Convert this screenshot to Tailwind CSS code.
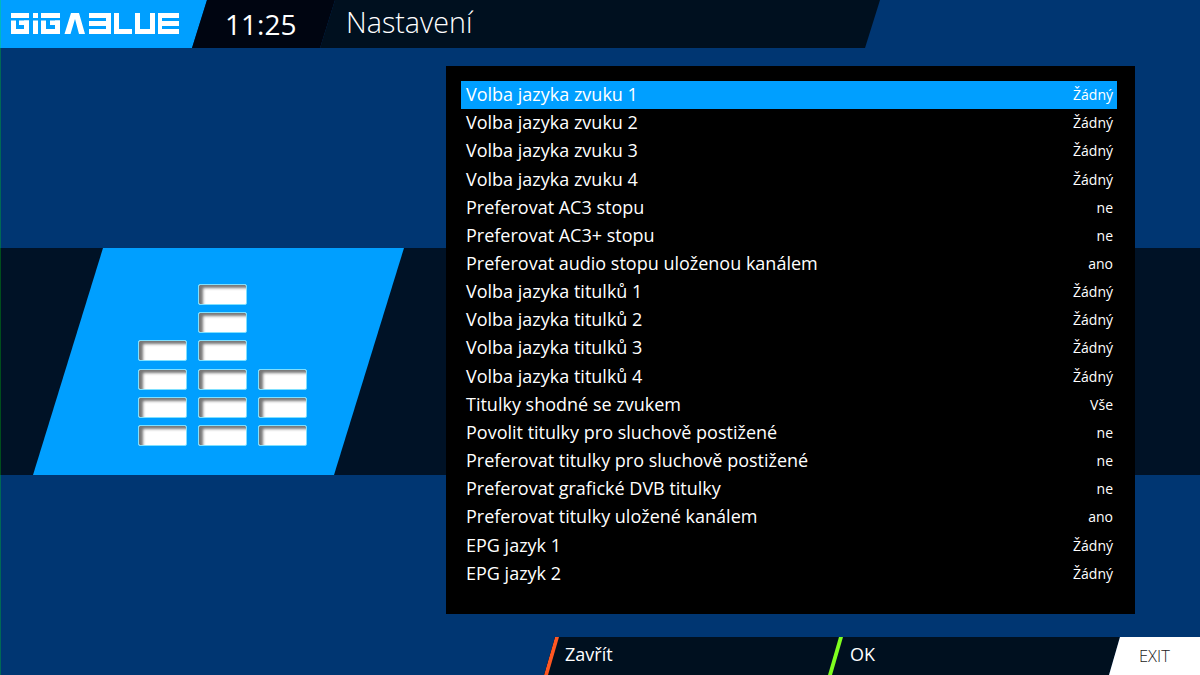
<!DOCTYPE html>
<html lang="cs">
<head>
<meta charset="utf-8">
<script src="https://cdn.jsdelivr.net/npm/@tailwindcss/browser@4"></script>
</head>
<body class="m-0">
<div class="relative w-[1200px] h-[675px] overflow-hidden bg-[#003672] text-white font-['Open_Sans','Noto_Sans',sans-serif]">

  <!-- header -->
  <header class="relative z-10 flex h-[48px] w-[880px]">
    <div class="w-[207px] h-full shrink-0 bg-[#009fff] [clip-path:polygon(0_0,100%_0,192px_100%,0_100%)] flex items-start pt-[13px] pl-[11px]">
      <svg width="168" height="21" viewBox="0 0 168 21" fill="#fff" role="img" aria-label="GigaBlue logo">
        <rect x="0" y="0" width="18" height="5"/><rect x="0" y="7.500" width="5" height="13.500"/><rect x="0" y="16" width="18" height="5"/><rect x="8" y="7.500" width="10" height="4.500"/><rect x="13" y="7.500" width="5" height="13.500"/>
        <rect x="22" y="0" width="5" height="5"/><rect x="22" y="7.500" width="5" height="13.500"/>
        <rect x="30" y="0" width="19" height="5"/><rect x="30" y="7.500" width="5" height="13.500"/><rect x="30" y="16" width="19" height="5"/><rect x="39" y="7.500" width="10" height="4.500"/><rect x="44" y="7.500" width="5" height="13.500"/>
        <path d="M60 0h8l6 21h-6l-4-15-4.500 15h-6z"/>
        <rect x="78" y="0" width="22" height="5"/><rect x="78" y="8" width="22" height="5"/><rect x="78" y="16" width="22" height="5"/><rect x="95" y="0" width="5" height="21"/>
        <rect x="103" y="0" width="5" height="21"/><rect x="103" y="16" width="18" height="5"/>
        <rect x="124" y="0" width="5" height="21"/><rect x="124" y="16" width="20" height="5"/><rect x="139" y="0" width="5" height="21"/>
        <rect x="147" y="0" width="21" height="5"/><rect x="147" y="8" width="21" height="5"/><rect x="147" y="16" width="21" height="5"/><rect x="147" y="0" width="4" height="21"/>
      </svg>
    </div>
    <div class="w-[143px] h-full shrink-0 -ml-[15px] bg-[#000511] [clip-path:polygon(15px_0,100%_0,128px_100%,0_100%)] flex items-center pl-[33px] text-[28px] font-normal">11:25</div>
    <div class="flex-1 h-full -ml-[15px] bg-[#00101f] [clip-path:polygon(15px_0,100%_0,calc(100%-15px)_100%,0_100%)] flex items-center pl-[26px] pb-[4px] text-[28.7px] font-light">Nastavení</div>
  </header>

  <!-- band behind the content -->
  <div class="absolute left-0 right-0 top-[248px] h-[227px] bg-[#001226]"></div>
  <div class="absolute z-20 left-0 top-0 h-full w-[1px] bg-[#00ff00]/25"></div>

  <!-- blue parallelogram with icon -->
  <div class="absolute left-[33px] top-[248px] w-[371px] h-[227px] bg-[#009fff] [clip-path:polygon(70px_0,100%_0,301px_100%,0_100%)]">
    <div class="absolute left-[104.500px] top-[36px] grid grid-cols-[49px_49px_49px] gap-x-[11px] gap-y-[7.200px]">
      <i class="col-start-2 h-[21px] block bg-white rounded-[2px] border-[1.5px] border-[#7fe0ff] shadow-[inset_4px_3px_3px_#777]"></i>
      <i class="col-start-2 h-[21px] block bg-white rounded-[2px] border-[1.5px] border-[#7fe0ff] shadow-[inset_4px_3px_3px_#777]"></i>
      <i class="col-start-1 h-[21px] block bg-white rounded-[2px] border-[1.5px] border-[#7fe0ff] shadow-[inset_4px_3px_3px_#777]"></i>
      <i class="col-start-2 h-[21px] block bg-white rounded-[2px] border-[1.5px] border-[#7fe0ff] shadow-[inset_4px_3px_3px_#777]"></i>
      <i class="col-start-1 h-[21px] block bg-white rounded-[2px] border-[1.5px] border-[#7fe0ff] shadow-[inset_4px_3px_3px_#777]"></i>
      <i class="h-[21px] block bg-white rounded-[2px] border-[1.5px] border-[#7fe0ff] shadow-[inset_4px_3px_3px_#777]"></i>
      <i class="h-[21px] block bg-white rounded-[2px] border-[1.5px] border-[#7fe0ff] shadow-[inset_4px_3px_3px_#777]"></i>
      <i class="h-[21px] block bg-white rounded-[2px] border-[1.5px] border-[#7fe0ff] shadow-[inset_4px_3px_3px_#777]"></i>
      <i class="h-[21px] block bg-white rounded-[2px] border-[1.5px] border-[#7fe0ff] shadow-[inset_4px_3px_3px_#777]"></i>
      <i class="h-[21px] block bg-white rounded-[2px] border-[1.5px] border-[#7fe0ff] shadow-[inset_4px_3px_3px_#777]"></i>
      <i class="h-[21px] block bg-white rounded-[2px] border-[1.5px] border-[#7fe0ff] shadow-[inset_4px_3px_3px_#777]"></i>
      <i class="h-[21px] block bg-white rounded-[2px] border-[1.5px] border-[#7fe0ff] shadow-[inset_4px_3px_3px_#777]"></i>
      <i class="h-[21px] block bg-white rounded-[2px] border-[1.5px] border-[#7fe0ff] shadow-[inset_4px_3px_3px_#777]"></i>
    </div>
  </div>

  <!-- settings list -->
  <main class="absolute left-[446px] top-[66px] w-[689px] h-[548px] bg-black pt-[15px] px-[15px]">
    <ul class="w-[656px] text-[18px]">
      <li class="h-[28.17px] flex items-center justify-between pl-[5px] pr-[4px] pb-[1px] bg-[#009fff]"><span>Volba jazyka zvuku 1</span><span class="text-[14px]">Žádný</span></li>
      <li class="h-[28.17px] flex items-center justify-between pl-[5px] pr-[4px] pb-[1px]"><span>Volba jazyka zvuku 2</span><span class="text-[14px]">Žádný</span></li>
      <li class="h-[28.17px] flex items-center justify-between pl-[5px] pr-[4px] pb-[1px]"><span>Volba jazyka zvuku 3</span><span class="text-[14px]">Žádný</span></li>
      <li class="h-[28.17px] flex items-center justify-between pl-[5px] pr-[4px] pb-[1px]"><span>Volba jazyka zvuku 4</span><span class="text-[14px]">Žádný</span></li>
      <li class="h-[28.17px] flex items-center justify-between pl-[5px] pr-[4px] pb-[1px]"><span>Preferovat AC3 stopu</span><span class="text-[14px]">ne</span></li>
      <li class="h-[28.17px] flex items-center justify-between pl-[5px] pr-[4px] pb-[1px]"><span>Preferovat AC3+ stopu</span><span class="text-[14px]">ne</span></li>
      <li class="h-[28.17px] flex items-center justify-between pl-[5px] pr-[4px] pb-[1px]"><span>Preferovat audio stopu uloženou kanálem</span><span class="text-[14px]">ano</span></li>
      <li class="h-[28.17px] flex items-center justify-between pl-[5px] pr-[4px] pb-[1px]"><span>Volba jazyka titulků 1</span><span class="text-[14px]">Žádný</span></li>
      <li class="h-[28.17px] flex items-center justify-between pl-[5px] pr-[4px] pb-[1px]"><span>Volba jazyka titulků 2</span><span class="text-[14px]">Žádný</span></li>
      <li class="h-[28.17px] flex items-center justify-between pl-[5px] pr-[4px] pb-[1px]"><span>Volba jazyka titulků 3</span><span class="text-[14px]">Žádný</span></li>
      <li class="h-[28.17px] flex items-center justify-between pl-[5px] pr-[4px] pb-[1px]"><span>Volba jazyka titulků 4</span><span class="text-[14px]">Žádný</span></li>
      <li class="h-[28.17px] flex items-center justify-between pl-[5px] pr-[4px] pb-[1px]"><span>Titulky shodné se zvukem</span><span class="text-[14px]">Vše</span></li>
      <li class="h-[28.17px] flex items-center justify-between pl-[5px] pr-[4px] pb-[1px]"><span>Povolit titulky pro sluchově postižené</span><span class="text-[14px]">ne</span></li>
      <li class="h-[28.17px] flex items-center justify-between pl-[5px] pr-[4px] pb-[1px]"><span>Preferovat titulky pro sluchově postižené</span><span class="text-[14px]">ne</span></li>
      <li class="h-[28.17px] flex items-center justify-between pl-[5px] pr-[4px] pb-[1px]"><span>Preferovat grafické DVB titulky</span><span class="text-[14px]">ne</span></li>
      <li class="h-[28.17px] flex items-center justify-between pl-[5px] pr-[4px] pb-[1px]"><span>Preferovat titulky uložené kanálem</span><span class="text-[14px]">ano</span></li>
      <li class="h-[28.17px] flex items-center justify-between pl-[5px] pr-[4px] pb-[1px]"><span>EPG jazyk 1</span><span class="text-[14px]">Žádný</span></li>
      <li class="h-[28.17px] flex items-center justify-between pl-[5px] pr-[4px] pb-[1px]"><span>EPG jazyk 2</span><span class="text-[14px]">Žádný</span></li>
    </ul>
  </main>

  <!-- footer -->
  <footer class="absolute left-[544px] right-0 bottom-0 h-[38px] flex text-[18px]">
    <div class="w-[284px] h-full shrink-0 bg-[#00101f] [clip-path:polygon(11px_0,100%_0,100%_100%,0_100%)] relative flex items-center pl-[21px] pb-[4px]">
      <span class="absolute left-0 top-0 h-full w-[16px] bg-[#ff5722] [clip-path:polygon(11px_0,15px_0,4px_100%,0_100%)]"></span>Zavřít
    </div>
    <div class="w-[292px] h-full shrink-0 bg-[#00101f] relative flex items-center pl-[22px] pb-[4px] [clip-path:polygon(0_0,100%_0,calc(100%-11px)_100%,0_100%)]">
      <span class="absolute left-0 top-0 h-full w-[16px] bg-[#7fff1f] [clip-path:polygon(11px_0,15px_0,4px_100%,0_100%)]"></span>OK
    </div>
    <div class="flex-1 h-full -ml-[11px] bg-white [clip-path:polygon(11px_0,100%_0,100%_100%,0_100%)] flex items-center pl-[30px] pt-[1px] text-[#222] text-[16.500px] font-light">EXIT</div>
  </footer>
</div>
</body>
</html>
